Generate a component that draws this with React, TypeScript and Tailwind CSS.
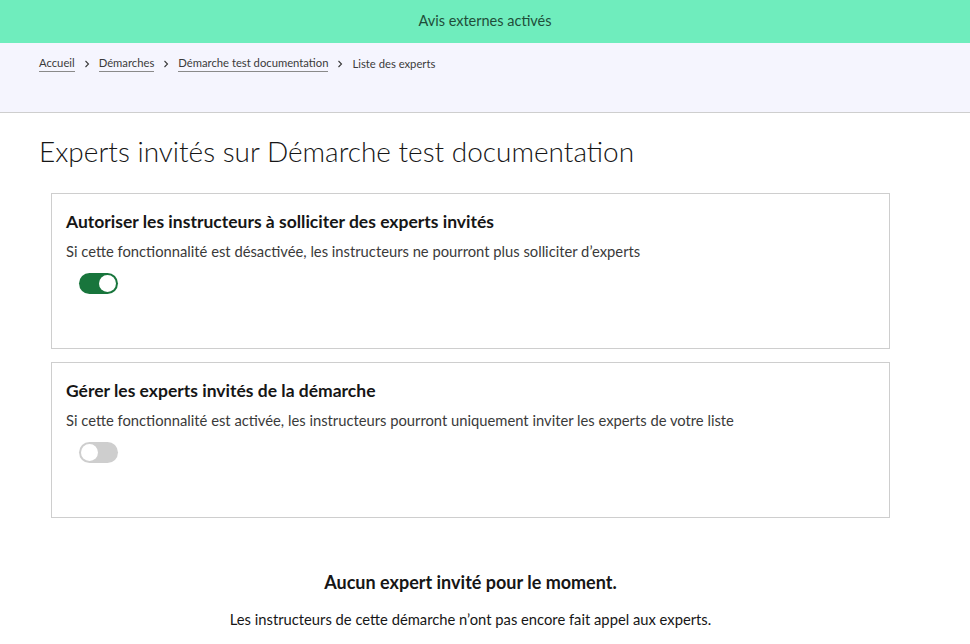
import React from "react";

function Toggle({ on }: { on: boolean }) {
  return (
    <div
      className={
        "relative w-[39px] h-[21px] rounded-full " +
        (on ? "bg-[#18753c]" : "bg-[#cecece]")
      }
    >
      <div
        className={
          "absolute top-[2px] w-[17px] h-[17px] rounded-full bg-white " +
          (on ? "left-[20px]" : "left-[2px]")
        }
      />
    </div>
  );
}

function Chevron() {
  return (
    <svg className="mx-[9px] w-[6px] h-[8px]" viewBox="0 0 6 8" fill="none">
      <path d="M1.5 1 L4.5 4 L1.5 7" stroke="#3a3a3a" strokeWidth="1.1" />
    </svg>
  );
}

function Card({ title, desc, on }: { title: string; desc: string; on: boolean }) {
  return (
    <div className="border border-[#cecece] pl-[14px] pr-4 pt-[16px] h-[156px]">
      <h3 className="text-[17.5px] font-bold text-[#161616] leading-6">{title}</h3>
      <p className="mt-[5px] text-[14.75px] text-[#3a3a3a] leading-6">{desc}</p>
      <div className="mt-[10px] ml-[13px]">
        <Toggle on={on} />
      </div>
    </div>
  );
}

export default function App() {
  return (
    <div className="min-h-[644px] bg-white" style={{ fontFamily: "Lato, 'Noto Sans', sans-serif" }}>
      <div className="h-[43px] bg-[#6fedbd] flex items-center justify-center text-[14.5px] text-[#1f4e3a] pb-[2px]">
        Avis externes activés
      </div>
      <div className="h-[70px] bg-[#f5f5fe] border-b border-[#cecece] px-[39px] pt-[12px]">
        <nav className="flex items-center text-[11.25px] text-[#3a3a3a] leading-5">
          <a className="border-b border-[#8a8a8a] leading-4">Accueil</a>
          <Chevron />
          <a className="border-b border-[#8a8a8a] leading-4">Démarches</a>
          <Chevron />
          <a className="border-b border-[#8a8a8a] leading-4">Démarche test documentation</a>
          <Chevron />
          <span className="leading-4">Liste des experts</span>
        </nav>
      </div>
      <div className="px-[39px]">
        <h1 className="mt-[22px] text-[28px] font-light text-[#161616] leading-8">
          Experts invités sur Démarche test documentation
        </h1>
        <div className="pl-[12px] w-[851px] mt-[26px] flex flex-col gap-[13px]">
          <Card
            title="Autoriser les instructeurs à solliciter des experts invités"
            desc="Si cette fonctionnalité est désactivée, les instructeurs ne pourront plus solliciter d’experts"
            on={true}
          />
          <Card
            title="Gérer les experts invités de la démarche"
            desc="Si cette fonctionnalité est activée, les instructeurs pourront uniquement inviter les experts de votre liste"
            on={false}
          />
        </div>
        <div className="w-[863px] flex flex-col items-center mt-[52px]">
          <h3 className="text-[18px] font-bold text-[#161616] leading-6">Aucun expert invité pour le moment.</h3>
          <p className="mt-[13px] text-[14.75px] text-[#161616] leading-6">
            Les instructeurs de cette démarche n’ont pas encore fait appel aux experts.
          </p>
        </div>
      </div>
    </div>
  );
}
